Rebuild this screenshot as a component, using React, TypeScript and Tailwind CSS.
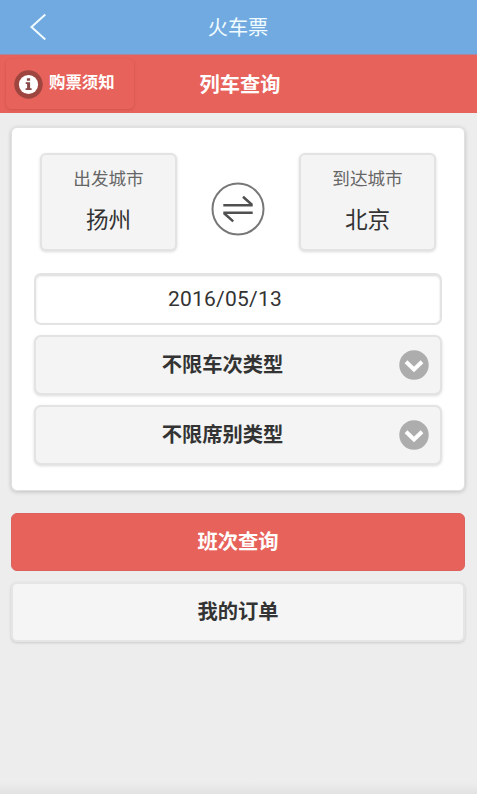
import type { ReactNode } from 'react';

const filters = ['不限车次类型', '不限席别类型'];

function BackIcon() {
  return (
    <svg width="16" height="28" viewBox="0 0 16 28" fill="none" stroke="#f0fbff" strokeWidth="2">
      <path d="M15.3 1.5 1.5 14l13.8 12.5" />
    </svg>
  );
}

function InfoIcon() {
  return (
    <svg width="29" height="29" viewBox="0 0 29 29">
      <circle cx="14.5" cy="14.5" r="14.2" fill="#9f453f" />
      <circle cx="14.5" cy="14.5" r="9.6" fill="#fff" />
      <path d="M12.9 8.3h3.2v2.5h-3.2zM11.7 12.2h4.4v6h1.5v1.9h-6v-1.9h1.5v-4.1h-1.4z" fill="#874a49" />
    </svg>
  );
}

function SwapIcon() {
  return (
    <svg width="54" height="54" viewBox="0 0 54 54" fill="none">
      <circle cx="27" cy="27" r="25.5" stroke="#777" strokeWidth="2" />
      <path d="M12.3 23.2h29.4M32 14.8l9.2 8.2M41.7 30.8H12.3M12.8 31l9.4 8.4" stroke="#505050" strokeWidth="2.5" />
    </svg>
  );
}

function DownIcon() {
  return (
    <svg width="30" height="30" viewBox="0 0 30 30" fill="none">
      <circle cx="15" cy="15" r="14.7" fill="#adadad" />
      <path d="m7 11.8 8 7.6 8-7.6" stroke="#fff" strokeWidth="4" />
    </svg>
  );
}

function CityBox({ label, city }: { label: string; city: string }) {
  return (
    <button className="flex h-[98px] w-[137px] flex-col items-center rounded-[6px] border-2 border-[#e3e3e3] bg-[#f4f4f4] pt-[11px] shadow-[0_1px_3px_rgba(0,0,0,0.15)]">
      <span className="text-[17.6px] leading-[26px] text-[#666]">{label}</span>
      <span className="mt-[12px] text-[22.6px] leading-[34px] text-[#333]">{city}</span>
    </button>
  );
}

function Select({ children }: { children: ReactNode }) {
  return (
    <button className="flex h-[60px] w-full items-center rounded-[7px] border-2 border-[#e3e3e3] bg-[#f4f4f4] pr-[11px] shadow-[0_1px_3px_rgba(0,0,0,0.15)]">
      <span className="flex-1 pl-[10px] text-center text-[20.3px] font-bold text-[#333]">{children}</span>
      <DownIcon />
    </button>
  );
}

export default function App() {
  return (
    <div className="flex h-[794px] w-[477px] flex-col bg-[#ededed] font-['Roboto','Noto_Sans_CJK_SC',sans-serif]">
      <header className="grid h-[55px] shrink-0 grid-cols-[1fr_auto_1fr] items-center border-b border-[#a9869f] bg-[#70aae0]">
        <button className="pl-[30px]" aria-label="返回">
          <BackIcon />
        </button>
        <h1 className="-ml-px pt-[3px] text-[20.2px] text-[#f0fbff]">火车票</h1>
      </header>

      <div className="grid h-[58px] shrink-0 grid-cols-[1fr_auto_1fr] items-center bg-[#e7625b] pl-[6px] text-white">
        <button className="flex h-[50px] w-[128px] items-center rounded-[5px] pl-[8px] shadow-[0_1px_3px_rgba(110,30,20,0.2)]">
          <InfoIcon />
          <span className="pb-px pl-[6px] text-[16.4px] font-bold whitespace-nowrap">购票须知</span>
        </button>
        <h2 className="-ml-[3px] pt-[2px] text-[20.2px] font-bold">列车查询</h2>
      </div>

      <main className="pt-[14px] pr-[12px] pl-[11px]">
        <section className="h-[364px] rounded-[6px] border border-[#e0e2e0] bg-white px-[22px] pt-[25px] shadow-[0_1px_4px_rgba(0,0,0,0.2)]">
          <div className="flex items-center justify-between px-[6px]">
            <CityBox label="出发城市" city="扬州" />
            <button className="mt-[14px]" aria-label="交换城市">
              <SwapIcon />
            </button>
            <CityBox label="到达城市" city="北京" />
          </div>

          <div className="mt-[22px] flex h-[52px] items-center justify-center rounded-[7px] border-2 border-[#e3e3e3] bg-white pt-px pr-[26px] text-[21px] tracking-[0.25px] text-[#333] shadow-[inset_0_1px_2px_rgba(0,0,0,0.15)]">
            2016/05/13
          </div>

          <div className="mt-[10px] flex flex-col gap-[10px]">
            {filters.map((label) => (
              <Select key={label}>{label}</Select>
            ))}
          </div>
        </section>

        <button className="mt-[22px] flex h-[58px] w-full items-center justify-center rounded-[6px] border border-[#db625d] bg-[#e7625b] pt-px text-[20.3px] font-bold text-white">
          班次查询
        </button>
        <button className="mt-[11px] flex h-[60px] w-full items-center justify-center rounded-[6px] border-2 border-[#e5e5e5] bg-[#f5f5f5] text-[20.3px] font-bold text-[#333] shadow-[0_1px_3px_rgba(0,0,0,0.15)]">
          我的订单
        </button>
      </main>

      <div className="mt-auto h-[12px] bg-linear-to-b from-[#ededed] to-[#e2e2e2]" />
    </div>
  );
}
